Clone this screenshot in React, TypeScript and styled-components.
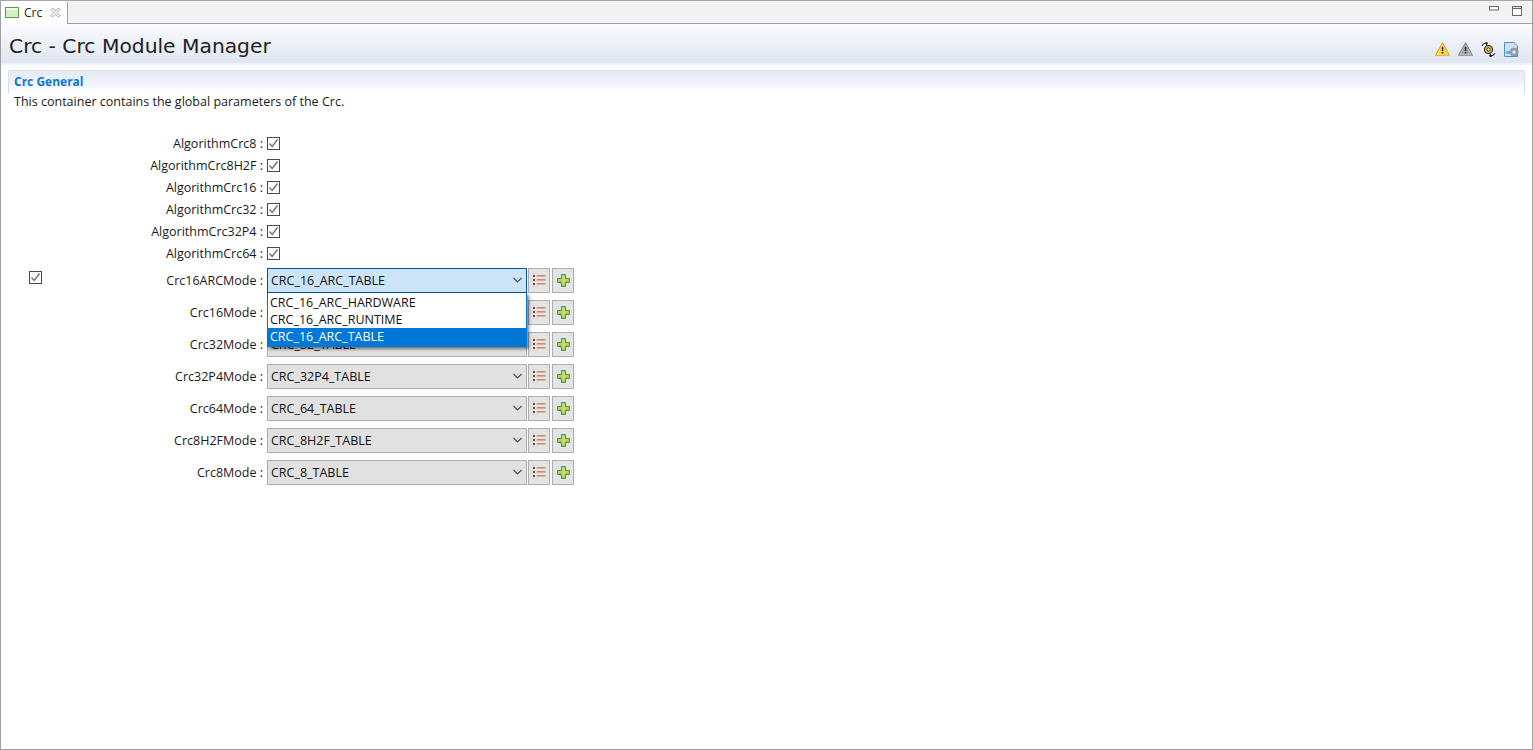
import React from "react";
import styled, { createGlobalStyle } from "styled-components";

const Global = createGlobalStyle`
  html, body { margin: 0; padding: 0; background: #fff; overflow: hidden; }
  #root { width: 1533px; height: 750px; }
`;
const Win = styled.div`
  width: 1533px; height: 750px; box-sizing: border-box;
  border: 1px solid #a0a0a0; border-top: 1px solid #a8a8a8;
  background: #fff; display: flex; flex-direction: column;
  font-family: "Open Sans", "Noto Sans", sans-serif; font-size: 12.5px; color: #1a1a1a; overflow: hidden;
`;
const TabBar = styled.div`
  height: 22px; flex: none; display: flex; background: #f2f2f2; border-bottom: 1px solid #a0a0a0; box-sizing: content-box; align-items: flex-start;
`;
const Tab = styled.div`
  width: 67px; height: 23px; box-sizing: border-box; background: #fff; border-right: 1px solid #a0a0a0; border-radius: 0 3px 0 0;
  display: flex; align-items: center; padding: 0 0 0 4px; gap: 5px; margin-bottom: -1px; position: relative; z-index: 1;
`;
const TabName = styled.span`font-size: 12px; line-height: 16px; color: #222;`;
const TabSpacer = styled.div`flex: 1;`;
const WinBtns = styled.div`display: flex; gap: 12px; padding: 5px 10px 0 0; align-items: flex-start;`;
const HeaderBar = styled.div`
  height: 41px; flex: none; display: flex; align-items: center; padding: 0 13px 0 8px;
  background: linear-gradient(#fbfcfe 0%, #eef2f8 45%, #dfe6f1 100%); border-bottom: 2px solid #eef2f8; box-sizing: border-box;
`;
const Title = styled.h1`
  margin: 0; flex: 1; font-family: "DejaVu Sans", sans-serif; font-weight: 400; font-size: 20.25px; line-height: 26px; color: #222; position: relative; top: 2px;
`;
const HeaderIcons = styled.div`display: flex; align-items: center; gap: 8px; padding-top: 11px;`;
const Section = styled.section`flex: 1; padding: 5px 7px 0 7px; display: flex; flex-direction: column;`;
const SectionTitle = styled.div`
  height: 24px; box-sizing: border-box; border: 1px solid #d5deea; border-bottom: none; border-radius: 3px 3px 0 0;
  background: linear-gradient(#e4e9f3 0%, #f0f3f8 50%, #ffffff 100%); padding: 2px 0 0 5px;
  font-weight: 700; font-size: 12px; line-height: 18px; color: #0a78d2;
`;
const Desc = styled.div`padding: 0 0 0 6px; line-height: 16px; font-size: 12.53px; color: #1a1a1a;`;
const Form = styled.div`display: flex; flex-direction: column; margin: 22px 0 0 -7px; position: relative;`;
const CheckRow = styled.div`height: 22px; display: flex; align-items: center;`;
const ComboRow = styled.div`height: 32px; display: flex; align-items: center; position: relative;`;
const Lead = styled.div`width: 42px; flex: none; height: 100%; box-sizing: border-box;`;
const FirstLead = styled(Lead)`display: flex; align-items: flex-start; padding: 7px 0 0 28px;`;
const Label = styled.div`flex: none; width: 223px; text-align: right; white-space: pre; padding-right: 3px; box-sizing: border-box; font-size: 12.5px;`;
const Box = styled.span`
  width: 13px; height: 13px; box-sizing: border-box; border: 1px solid #4a4a4a; background: #fff; display: inline-flex; align-items: center; justify-content: center; flex: none;
`;
const CheckGap = styled.span`width: 1px; flex: none;`;
const Combo = styled.div<{ $active?: boolean }>`
  width: 260px; height: 25px; box-sizing: border-box; flex: none; display: flex; align-items: center; justify-content: space-between; padding: 0 4px 0 3px; margin-left: 1px;
  background: ${p => (p.$active ? "#cce4f7" : "#e1e1e1")};
  border: 1px solid ${p => (p.$active ? "#005499" : "#adadad")};
  font-size: 12.5px; color: #111; white-space: pre;
`;
const Tool = styled.div`
  width: 22px; height: 25px; box-sizing: border-box; flex: none; margin-left: 1px; border: 1px solid #adadad; background: #e4e4e4; display: flex; align-items: center; justify-content: center;
  & + & { margin-left: 2px; }
`;
const Dropdown = styled.div`
  position: absolute; left: 266px; top: 29px; width: 260px; height: 54px; box-sizing: border-box; background: #fff; border: 1px solid #0078d7; border-top: none; border-bottom: none; z-index: 5; box-shadow: 2px 2px 3px rgba(0,0,0,.5); padding-top: 1px;
`;
const Option = styled.div<{ $sel?: boolean }>`
  height: ${p => (p.$sel ? 19 : 17)}px; line-height: 17px; padding-left: 2px; font-size: 12.5px; white-space: pre;
  background: ${p => (p.$sel ? "#0078d7" : "transparent")}; color: ${p => (p.$sel ? "#fff" : "#111")};
`;

const Check = () => (
  <Box>
    <svg width="11" height="11" viewBox="0 0 11 11"><path d="M1.5 5.5 L4.2 8.5 L9.5 1.5" fill="none" stroke="#6d6d6d" strokeWidth="1.3" /></svg>
  </Box>
);
const Chev = () => (
  <svg width="9" height="6" viewBox="0 0 9 6"><path d="M.5 1 L4.5 5 L8.5 1" fill="none" stroke="#4a5560" strokeWidth="1.2" /></svg>
);
const ListIcon = () => (
  <svg width="13" height="10" viewBox="0 0 13 10">
    {[0, 4, 8].map(y => (
      <g key={y}>
        <rect x="0" y={y} width="2" height="2" fill="#8b3b22" />
        <rect x="3.5" y={y + 0.3} width="9" height="1.1" fill="#c9674e" />
      </g>
    ))}
  </svg>
);
const Plus = () => (
  <svg width="13" height="13" viewBox="0 0 13 13">
    <path d="M4.5.5h4v4h4v4h-4v4h-4v-4h-4v-4h4z" fill="#a9c84e" stroke="#4b9160" />
    <path d="M5.5 1.5h2v4h4v1h-4v4h-2v-4h-4v-1h4z" fill="#d4e372" />
  </svg>
);
const Warn = ({ c1, c2, s }: { c1: string; c2: string; s: string }) => (
  <svg width="15" height="14" viewBox="0 0 14 13">
    <path d="M7 .7 L13.5 12.3 H.5 Z" fill={c1} stroke={s} strokeLinejoin="round" />
    <path d="M7 2.5 L11.5 11 H2.5 Z" fill={c2} />
    <rect x="6.3" y="4.5" width="1.5" height="4" fill="#333" />
    <rect x="6.3" y="9.3" width="1.5" height="1.5" fill="#333" />
  </svg>
);
const Gear = () => (
  <svg width="15" height="15" viewBox="0 0 16 16">
    <circle cx="8" cy="8" r="4.3" fill="#e8b93a" stroke="#222" strokeWidth="1.1" />
    <circle cx="8" cy="8" r="1.7" fill="#fff" stroke="#222" />
    <path d="M1 4 Q3 .8 7 1.2 M7 1.2 L4.8 .2 M7 1.2 L5.5 3" fill="none" stroke="#111" strokeWidth="1.1" />
    <path d="M15 12 Q13 15.2 9 14.8 M9 14.8 L11.2 15.8 M9 14.8 L10.5 13" fill="none" stroke="#111" strokeWidth="1.1" />
  </svg>
);
const DocGear = () => (
  <svg width="15" height="15" viewBox="0 0 15 15">
    <path d="M.5 .5 H10 L13.5 4 V14.5 H.5 Z" fill="#cfe2f6" stroke="#4d8fd6" />
    <rect x="2" y="9" width="4" height="3" fill="#6fa8e0" />
    <circle cx="10" cy="10" r="4" fill="#9aa3ad" stroke="#7d8791" strokeDasharray="2 .8" />
    <circle cx="10" cy="10" r="1.6" fill="#e7edf4" />
  </svg>
);
const checks = ["AlgorithmCrc8", "AlgorithmCrc8H2F", "AlgorithmCrc16", "AlgorithmCrc32", "AlgorithmCrc32P4", "AlgorithmCrc64"];
const combos: [string, string][] = [
  ["Crc16ARCMode", "CRC_16_ARC_TABLE"],
  ["Crc16Mode", "CRC_16_TABLE"],
  ["Crc32Mode", "CRC_32_TABLE"],
  ["Crc32P4Mode", "CRC_32P4_TABLE"],
  ["Crc64Mode", "CRC_64_TABLE"],
  ["Crc8H2FMode", "CRC_8H2F_TABLE"],
  ["Crc8Mode", "CRC_8_TABLE"],
];

export default function App() {
  return (
    <Win>
      <Global />
      <TabBar>
        <Tab>
          <svg width="14" height="11" viewBox="0 0 14 11"><rect x=".5" y=".5" width="13" height="10" fill="#d8eec4" stroke="#5d9b4b" /><rect x="1" y="1" width="12" height="2" fill="#eef8e4" /></svg>
          <TabName>Crc</TabName>
          <svg width="11" height="11" viewBox="0 0 11 11" style={{ marginLeft: 3 }}><path d="M1 2.5 L2.5 1 L5.5 4 L8.5 1 L10 2.5 L7 5.5 L10 8.5 L8.5 10 L5.5 7 L2.5 10 L1 8.5 L4 5.5 Z" fill="#fff" stroke="#8c8c8c" strokeWidth=".8" /></svg>
        </Tab>
        <TabSpacer />
        <WinBtns>
          <svg width="11" height="5" viewBox="0 0 11 5"><rect x=".5" y=".5" width="9" height="3.5" fill="#fff" stroke="#6a6a6a" /></svg>
          <svg width="10" height="10" viewBox="0 0 10 10"><rect x=".5" y=".5" width="9" height="9" fill="#fff" stroke="#6a6a6a" /><rect x=".5" y=".5" width="9" height="2" fill="#e0e0e0" stroke="#6a6a6a" /></svg>
        </WinBtns>
      </TabBar>
      <HeaderBar>
        <Title>Crc - Crc Module Manager</Title>
        <HeaderIcons>
          <Warn c1="#ffe37a" c2="#ffd23c" s="#e2a81e" />
          <Warn c1="#c4c4c4" c2="#a6a6a6" s="#8a8a8a" />
          <Gear />
          <DocGear />
        </HeaderIcons>
      </HeaderBar>
      <Section>
        <SectionTitle>Crc General</SectionTitle>
        <Desc>This container contains the global parameters of the Crc.</Desc>
        <Form>
          {checks.map(c => (
            <CheckRow key={c}>
              <Lead />
              <Label>{c + " :"}</Label>
              <CheckGap />
              <Check />
            </CheckRow>
          ))}
          {combos.map(([l, v], i) => (
            <ComboRow key={l}>
              {i === 0 ? <FirstLead><Check /></FirstLead> : <Lead />}
              <Label>{l + " :"}</Label>
              <Combo $active={i === 0}>{v}<Chev /></Combo>
              <Tool><ListIcon /></Tool>
              <Tool><Plus /></Tool>
              {i === 0 && (
                <Dropdown>
                  <Option>CRC_16_ARC_HARDWARE</Option>
                  <Option>CRC_16_ARC_RUNTIME</Option>
                  <Option $sel>CRC_16_ARC_TABLE</Option>
                </Dropdown>
              )}
            </ComboRow>
          ))}
        </Form>
      </Section>
    </Win>
  );
}
